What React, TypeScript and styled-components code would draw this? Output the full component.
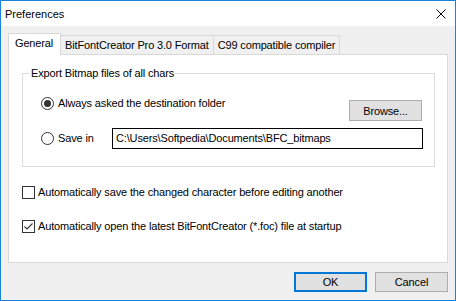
import React from "react";
import styled, { createGlobalStyle } from "styled-components";

const GlobalStyle = createGlobalStyle`
  html, body {
    margin: 0;
    padding: 0;
    background: #ffffff;
  }
  * {
    box-sizing: border-box;
  }
`;

const font = `"Liberation Sans", Arial, sans-serif`;

const Window = styled.div`
  width: 456px;
  height: 301px;
  border: 1px solid #1883d7;
  display: flex;
  flex-direction: column;
  font-family: ${font};
  font-size: 11px;
  letter-spacing: -0.15px;
  line-height: 13px;
  color: #000;
  background: #f0f0f0;
`;

const TitleBar = styled.div`
  height: 25px;
  background: #fff;
  display: flex;
  align-items: center;
  justify-content: space-between;
  padding: 1px 9px 0 4px;
  letter-spacing: 0;
`;

const Body = styled.div`
  flex: 1;
  display: flex;
  flex-direction: column;
  padding: 7px 7px 0 7px;
`;

const TabRow = styled.div`
  display: flex;
  align-items: flex-end;
  height: 21px;
  position: relative;
  z-index: 1;
`;

const Tab = styled.div<{ $active?: boolean }>`
  height: ${(p) => (p.$active ? "22px" : "19px")};
  margin-bottom: ${(p) => (p.$active ? "-1px" : "0")};
  padding: ${(p) => (p.$active ? "0 7px 2px 6px" : "0 4px 0 4px")};
  margin-left: -1px;
  display: flex;
  align-items: center;
  border: 1px solid #d9d9d9;
  border-bottom: none;
  background: ${(p) => (p.$active ? "#fff" : "#f0f0f0")};
  &:first-child {
    margin-left: 0;
  }
`;

const Panel = styled.div`
  height: 209px;
  background: #fff;
  border: 1px solid #d9d9d9;
  padding: 12px 12px 0 13px;
  display: flex;
  flex-direction: column;
`;

const GroupBox = styled.fieldset`
  margin: 0;
  min-width: 0;
  height: 100px;
  border: 1px solid #dcdcdc;
  padding: 17px 11px 0 18px;
  display: flex;
  flex-direction: column;
  gap: 7px;
`;

const Legend = styled.legend`
  padding: 0 1px;
  margin-left: -11px;
  line-height: 13px;
`;

const OptionRow = styled.div<{ $top?: boolean }>`
  display: flex;
  align-items: ${(p) => (p.$top ? "flex-start" : "center")};
`;

const Radio = styled.span<{ $checked?: boolean }>`
  width: 13px;
  height: 13px;
  border-radius: 50%;
  border: 1px solid #333;
  display: inline-flex;
  align-items: center;
  justify-content: center;
  margin-right: 4px;
  flex-shrink: 0;
  &::after {
    content: "";
    width: 7px;
    height: 7px;
    border-radius: 50%;
    background: ${(p) => (p.$checked ? "#333" : "transparent")};
  }
`;

const RadioLabel = styled.span<{ $width?: number }>`
  flex: ${(p) => (p.$width ? "none" : "1")};
  width: ${(p) => (p.$width ? `${p.$width}px` : "auto")};
`;

const Button = styled.button<{ $default?: boolean; $h?: number; $top?: number; $right?: number }>`
  width: 73px;
  height: ${(p) => p.$h ?? 20}px;
  margin-top: ${(p) => p.$top ?? 0}px;
  margin-right: ${(p) => p.$right ?? 0}px;
  padding: 0;
  font-family: ${font};
  font-size: 11px;
  letter-spacing: -0.15px;
  color: #000;
  background: #e1e1e1;
  border: ${(p) => (p.$default ? "2px solid #0078d7" : "1px solid #adadad")};
`;

const PathInput = styled.div`
  flex: 1;
  height: 21px;
  border: 1px solid #000;
  display: flex;
  align-items: center;
  padding-left: 3px;
`;

const CheckList = styled.div`
  display: flex;
  flex-direction: column;
  gap: 21px;
  margin-top: 19px;
`;

const CheckRow = styled.label`
  display: flex;
  align-items: center;
  height: 13px;
`;

const Box = styled.span`
  width: 13px;
  height: 13px;
  border: 1px solid #333;
  margin-right: 3px;
  display: inline-flex;
  align-items: center;
  justify-content: center;
  flex-shrink: 0;
`;

const Footer = styled.div`
  display: flex;
  justify-content: flex-end;
  gap: 8px;
  padding-top: 9px;
`;

function CloseIcon() {
  return (
    <svg width="10" height="10" viewBox="0 0 10 10">
      <path d="M0.5 0.5 L9.5 9.5 M9.5 0.5 L0.5 9.5" stroke="#000" strokeWidth="1" />
    </svg>
  );
}

function Tick() {
  return (
    <svg width="11" height="11" viewBox="0 0 11 11">
      <path d="M1.5 5.5 L4 8 L9.5 2.5" stroke="#333" strokeWidth="1.1" fill="none" />
    </svg>
  );
}

export default function App() {
  return (
    <>
      <GlobalStyle />
      <Window>
        <TitleBar>
          <span>Preferences</span>
          <CloseIcon />
        </TitleBar>
        <Body>
          <TabRow>
            <Tab $active>General</Tab>
            <Tab>BitFontCreator Pro 3.0 Format</Tab>
            <Tab>C99 compatible compiler</Tab>
          </TabRow>
          <Panel>
            <GroupBox>
              <Legend>Export Bitmap files of all chars</Legend>
              <OptionRow $top>
                <Radio $checked />
                <RadioLabel>Always asked the destination folder</RadioLabel>
                <Button $h={21} $top={3} $right={1}>
                  Browse...
                </Button>
              </OptionRow>
              <OptionRow>
                <Radio />
                <RadioLabel $width={54}>Save in</RadioLabel>
                <PathInput>C:\Users\Softpedia\Documents\BFC_bitmaps</PathInput>
              </OptionRow>
            </GroupBox>
            <CheckList>
              <CheckRow>
                <Box />
                Automatically save the changed character before editing another
              </CheckRow>
              <CheckRow>
                <Box>
                  <Tick />
                </Box>
                Automatically open the latest BitFontCreator (*.foc) file at startup
              </CheckRow>
            </CheckList>
          </Panel>
          <Footer>
            <Button $default>OK</Button>
            <Button>Cancel</Button>
          </Footer>
        </Body>
      </Window>
    </>
  );
}
